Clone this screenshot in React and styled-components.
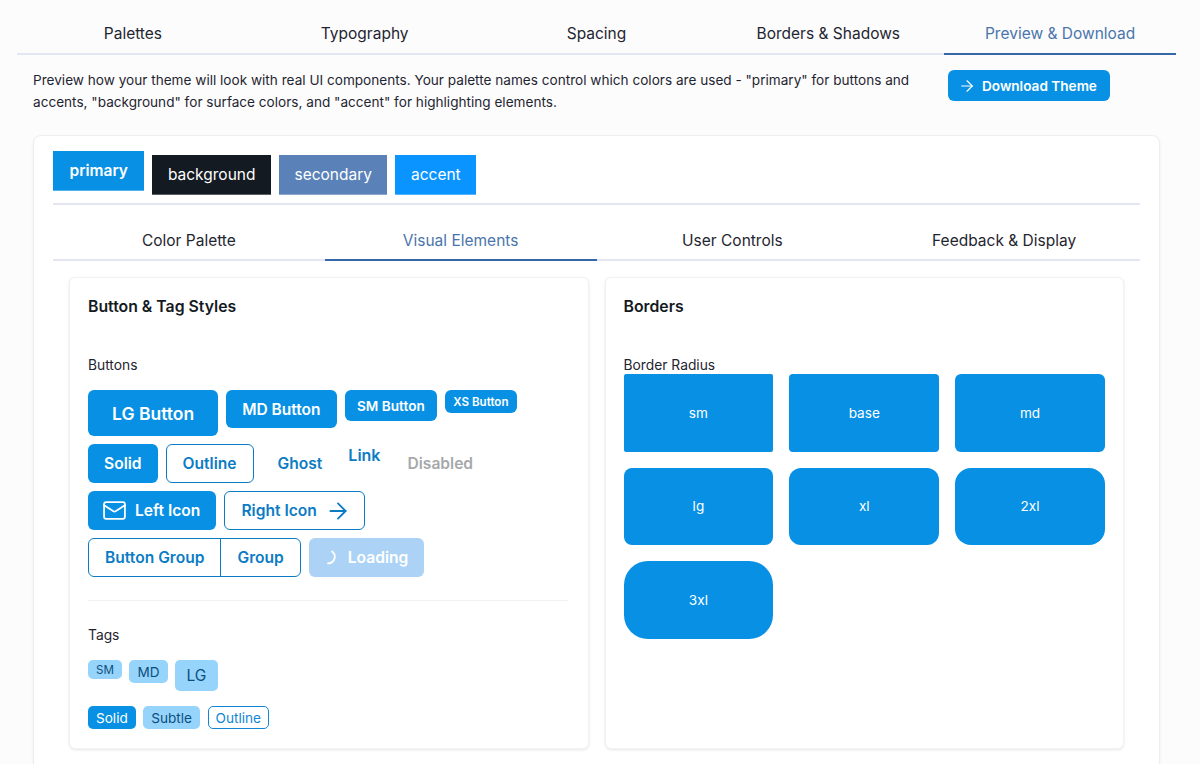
import styled, { createGlobalStyle, css } from 'styled-components'
import { ArrowRight, Mail } from 'lucide-react'

const primary = '#0891e4'
const primaryDark = '#0b7cc4'
const soft = '#97d4fb'
const softText = '#0b4f80'
const activeTab = '#4a75ab'

const Global = createGlobalStyle`
  html, body {
    margin: 0;
    height: 764px;
    overflow: hidden;
    background: #fcfcfd;
    font-family: Inter, "Liberation Sans", sans-serif;
    color: #1a202c;
  }
  * { box-sizing: border-box; }
`

const Page = styled.div`
  padding: 12px 24px 0 17px;
`

// tab strips
const TabRow = styled.div`
  display: flex;
  border-bottom: 2px solid #e4e7f2;
`
const Tab = styled.div`
  flex: 1;
  height: ${(p) => p.$height}px;
  padding-top: ${(p) => p.$offset || 0}px;
  margin-bottom: -2px;
  display: flex;
  align-items: center;
  justify-content: center;
  font-size: 15.5px;
  color: ${(p) => (p.$active ? activeTab : '#1f2530')};
  border-bottom: 2px solid ${(p) => (p.$active ? '#3568a6' : 'transparent')};
`

const Intro = styled.div`
  display: flex;
  padding: 15px 16px 0;
  height: 80px;
`
const IntroText = styled.p`
  width: 899px;
  margin: -1px 0 0;
  font-size: 13.6px;
  line-height: 22px;
  color: #1f2530;
`
const DownloadBtn = styled.div`
  width: 162px;
  height: 31px;
  margin-left: 16px;
  padding-left: 10px;
  display: flex;
  align-items: center;
  gap: 6px;
  background: ${primary};
  border-radius: 6px;
  color: #fff;
  font-size: 13.6px;
  font-weight: 600;
`

const Card = styled.div`
  margin-left: 16px;
  width: 1127px;
  padding: 15px 19px 0;
  height: 660px;
  background: #fff;
  border: 1px solid #eceef2;
  border-radius: 8px;
  box-shadow: 0 1px 3px rgba(0, 0, 0, 0.06);
`

const Swatches = styled.div`
  display: flex;
  gap: 8px;
  align-items: flex-start;
  height: 54px;
  border-bottom: 2px solid #e4e7f2;
`
const Swatch = styled.div`
  height: 40px;
  margin-top: ${(p) => (p.$selected ? 0 : 4)}px;
  padding: 0 ${(p) => (p.$selected ? 16.5 : 15.5)}px;
  display: flex;
  align-items: center;
  font-size: 15.5px;
  font-weight: ${(p) => (p.$selected ? 600 : 400)};
  color: #fff;
  background: ${(p) => p.$bg};
  border-bottom: 1px solid rgba(255, 255, 255, 0.3);
`

const Panels = styled.div`
  display: grid;
  grid-template-columns: 1fr 1fr;
  gap: 16px;
  padding: 16px 16px 0;
`
const Panel = styled.div`
  height: 472px;
  padding: 20px 18px 19px;
  border: 1px solid #f1f2f5;
  border-radius: 6px;
  background: #fff;
  box-shadow: 0 1px 3px rgba(0, 0, 0, 0.1);
`
const PanelTitle = styled.h3`
  margin: 0 0 41px;
  font-size: 15.8px;
  line-height: 18px;
  font-weight: 600;
  color: #141a22;
`
const Label = styled.div`
  font-size: 13.8px;
  line-height: 16px;
  color: #1f2530;
  margin-bottom: ${(p) => p.$gap}px;
`

const BtnRow = styled.div`
  display: flex;
  align-items: flex-start;
  gap: 8px;
  margin-bottom: 8px;
`
const sizes = {
  lg: css`height: 46px; padding: 0 24px; font-size: 17.5px;`,
  md: css`height: 38px; padding: 0 16px; font-size: 15.5px;`,
  sm: css`height: 31px; padding: 0 12.5px; font-size: 13.6px;`,
  xs: css`height: 23px; padding: 0 8px; font-size: 11.6px;`,
  row: css`height: 39px; padding: 0 16px; font-size: 15.6px;`,
}
const kinds = {
  solid: css`background: ${primary}; color: #fff;`,
  outline: css`background: #fff; color: ${primaryDark}; border: 1px solid ${primaryDark};`,
  ghost: css`background: transparent; color: ${primaryDark}; padding-right: 18px;`,
  disabled: css`background: transparent; color: #a6a8ab;`,
  loading: css`background: #acd3f5; color: #fff;`,
}
const Btn = styled.div`
  display: inline-flex;
  align-items: center;
  justify-content: center;
  gap: ${(p) => p.$gap || 0}px;
  flex: none;
  font-weight: 600;
  border-radius: 6px;
  ${(p) => sizes[p.$size || 'row']}
  ${(p) => kinds[p.$kind || 'solid']}
`
const LeftIconBtn = styled(Btn)`
  padding-left: 14px;
`
const RightIconBtn = styled(Btn)`
  padding-right: 13px;
`
const LinkBtn = styled.div`
  padding: 0 3px 0 0;
  font-size: 16px;
  line-height: 22px;
  font-weight: 600;
  color: ${primaryDark};
`
const BtnGroup = styled.div`
  display: flex;
  height: 39px;
  border: 1px solid ${primaryDark};
  border-radius: 6px;
  background: #fff;
`
const GroupItem = styled.div`
  display: flex;
  align-items: center;
  padding: 0 16px;
  font-size: 15.6px;
  font-weight: 600;
  color: ${primaryDark};
  & + & {
    border-left: 1px solid ${primaryDark};
  }
`

const Rule = styled.div`
  height: 1px;
  background: #f0f1f3;
  margin: 23px 2px 26px 0;
`

const TagRow = styled.div`
  display: flex;
  align-items: flex-start;
  gap: 7.5px;
  margin-bottom: 15px;
`
const tagSizes = {
  sm: css`height: 19px; padding: 0 8px; font-size: 11.6px;`,
  md: css`height: 23px; padding: 0 8px; font-size: 13.6px;`,
  lg: css`height: 31px; padding: 0 11.5px; font-size: 15.5px;`,
}
const tagKinds = {
  subtle: css`background: ${soft}; color: ${softText};`,
  solid: css`background: ${primary}; color: #fff;`,
  outline: css`background: #fff; color: #1186d6; border: 1px solid #1186d6; padding: 0 7px;`,
}
const Tag = styled.div`
  display: inline-flex;
  align-items: center;
  border-radius: 5px;
  ${(p) => tagSizes[p.$size]}
  ${(p) => tagKinds[p.$kind || 'subtle']}
`

const RadiusGrid = styled.div`
  display: grid;
  grid-template-columns: repeat(3, 1fr);
  gap: 16px;
`
const RadiusBox = styled.div`
  height: 77.5px;
  display: flex;
  align-items: center;
  justify-content: center;
  background: ${primary};
  color: #fff;
  font-size: 13.6px;
  border-radius: ${(p) => p.$radius}px;
`

const mainTabs = ['Palettes', 'Typography', 'Spacing', 'Borders & Shadows', 'Preview & Download']
const subTabs = ['Color Palette', 'Visual Elements', 'User Controls', 'Feedback & Display']
const radii = [['sm', 2], ['base', 4], ['md', 6], ['lg', 8], ['xl', 12], ['2xl', 16], ['3xl', 24]]

function App() {
  return (
    <Page>
      <Global />
      <TabRow>
        {mainTabs.map((t, i) => (
          <Tab key={t} $height={43} $offset={2} $active={i === 4}>{t}</Tab>
        ))}
      </TabRow>

      <Intro>
        <IntroText>
          Preview how your theme will look with real UI components. Your palette names control which colors are used - "primary" for buttons and accents, "background" for surface colors, and "accent" for highlighting elements.
        </IntroText>
        <DownloadBtn>
          <ArrowRight size={18} strokeWidth={1.5} />
          Download Theme
        </DownloadBtn>
      </Intro>

      <Card>
        <Swatches>
          <Swatch $bg={primary} $selected>primary</Swatch>
          <Swatch $bg="#141a22">background</Swatch>
          <Swatch $bg="#5a82b8">secondary</Swatch>
          <Swatch $bg="#0a94ff">accent</Swatch>
        </Swatches>
        <TabRow>
          {subTabs.map((t, i) => (
            <Tab key={t} $height={56} $offset={16} $active={i === 1}>{t}</Tab>
          ))}
        </TabRow>

        <Panels>
          <Panel>
            <PanelTitle>Button &amp; Tag Styles</PanelTitle>
            <Label $gap={17}>Buttons</Label>
            <BtnRow>
              <Btn $size="lg">LG Button</Btn>
              <Btn $size="md">MD Button</Btn>
              <Btn $size="sm">SM Button</Btn>
              <Btn $size="xs">XS Button</Btn>
            </BtnRow>
            <BtnRow>
              <Btn>Solid</Btn>
              <Btn $kind="outline">Outline</Btn>
              <Btn $kind="ghost">Ghost</Btn>
              <LinkBtn>Link</LinkBtn>
              <Btn $kind="disabled">Disabled</Btn>
            </BtnRow>
            <BtnRow>
              <LeftIconBtn $gap={8}><Mail size={25} strokeWidth={1.7} />Left Icon</LeftIconBtn>
              <RightIconBtn $kind="outline" $gap={8}>Right Icon<ArrowRight size={26} strokeWidth={1.7} /></RightIconBtn>
            </BtnRow>
            <BtnRow>
              <BtnGroup>
                <GroupItem>Button Group</GroupItem>
                <GroupItem>Group</GroupItem>
              </BtnGroup>
              <Btn $kind="loading" $gap={7}>
                <svg width="16" height="16" viewBox="0 0 16 16" fill="none">
                  <path d="M7 1.5a6.5 6.5 0 0 1 -4 11.8" stroke="#fff" strokeWidth="1.8" strokeLinecap="round" />
                </svg>
                Loading
              </Btn>
            </BtnRow>
            <Rule />
            <Label $gap={17}>Tags</Label>
            <TagRow>
              <Tag $size="sm">SM</Tag>
              <Tag $size="md">MD</Tag>
              <Tag $size="lg">LG</Tag>
            </TagRow>
            <TagRow>
              <Tag $size="md" $kind="solid">Solid</Tag>
              <Tag $size="md">Subtle</Tag>
              <Tag $size="md" $kind="outline">Outline</Tag>
            </TagRow>
          </Panel>

          <Panel>
            <PanelTitle>Borders</PanelTitle>
            <Label $gap={1}>Border Radius</Label>
            <RadiusGrid>
              {radii.map(([name, r]) => (
                <RadiusBox key={name} $radius={r}>{name}</RadiusBox>
              ))}
            </RadiusGrid>
          </Panel>
        </Panels>
      </Card>
    </Page>
  )
}

export default App
